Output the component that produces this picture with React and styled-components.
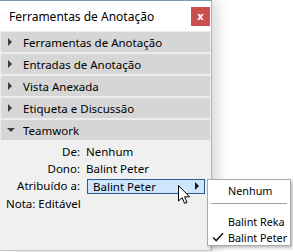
import React from 'react'
import styled, { createGlobalStyle } from 'styled-components'

const GlobalStyle = createGlobalStyle`
  *, *::before, *::after {
    box-sizing: border-box;
  }
  html, body {
    margin: 0;
    padding: 0;
    background: #ffffff;
  }
  body {
    font-family: "Noto Sans", "Open Sans", sans-serif;
    font-size: 11.5px;
    color: #000;
  }
`

const Stage = styled.div`
  position: relative;
  width: 293px;
  height: 252px;
  overflow: hidden;
`

const Panel = styled.div`
  width: 212px;
  height: 251px;
  background: #f0f0f0;
  border-top: 1px solid #7f99b3;
  border-right: 1px solid #b4b4b4;
  border-bottom: 1px solid #c8c8c8;
  box-shadow: 4px 0 14px rgba(0, 0, 0, 0.18);
  display: flex;
  flex-direction: column;
`

const TitleBar = styled.div`
  height: 30px;
  flex-shrink: 0;
  background: #ffffff;
  display: flex;
  align-items: center;
  justify-content: space-between;
  padding: 0 1px 0 9px;
  font-size: 12px;
`

const CloseButton = styled.button`
  width: 19px;
  height: 19px;
  border: none;
  padding: 0;
  background: #c9504f;
  color: #fff;
  font-family: "DejaVu Sans", sans-serif;
  font-weight: bold;
  font-size: 10px;
  line-height: 17px;
  display: flex;
  align-items: center;
  justify-content: center;
`

const Sections = styled.div`
  display: flex;
  flex-direction: column;
  gap: 2px;
  padding: 1px 1px 0 1px;
  background: #ececec;
`

const Header = styled.div`
  height: 20px;
  background: #d6d6d6;
  border-radius: 2px;
  display: flex;
  align-items: center;
  padding-left: ${p => (p.$open ? 6 : 7)}px;
  gap: ${p => (p.$open ? 8 : 11)}px;
`

const Arrow = styled.span`
  width: 0;
  height: 0;
  ${p =>
    p.$open
      ? `border-left: 4px solid transparent;
         border-right: 4px solid transparent;
         border-top: 4px solid #3c3c3c;`
      : `border-top: 4px solid transparent;
         border-bottom: 4px solid transparent;
         border-left: 4px solid #3c3c3c;`}
`

const Body = styled.div`
  flex: 1;
  background: #f0f0f0;
  padding-top: 3px;
  display: flex;
  flex-direction: column;
`

const FieldGrid = styled.div`
  display: grid;
  grid-template-columns: 80px 1fr;
  column-gap: 6px;
  grid-auto-rows: 16px;
  row-gap: 1px;
  align-items: center;
`

const Label = styled.span`
  text-align: right;
`

const Value = styled.span``

const Dropdown = styled.div`
  width: 118px;
  height: 15px;
  border: 1px solid #2a5b92;
  background: #cde6fb;
  display: flex;
  align-items: center;
  justify-content: space-between;
  padding: 0 5px 0 5px;
  margin-top: 2px;
  margin-left: 1px;
`

const SmallRight = styled.span`
  width: 0;
  height: 0;
  border-top: 4px solid transparent;
  border-bottom: 4px solid transparent;
  border-left: 4px solid #1a1a1a;
`

const Note = styled.div`
  padding-left: 6px;
  height: 16px;
  line-height: 16px;
  margin-top: 3px;
`

const Menu = styled.div`
  position: absolute;
  left: 207px;
  top: 179px;
  width: 84px;
  height: 67px;
  background: #ffffff;
  border: 1px solid #a9a9a9;
  box-shadow: 2px 2px 3px rgba(0, 0, 0, 0.25);
  display: flex;
  flex-direction: column;
  padding-top: 2px;
  font-size: 10.8px;
`

const MenuItem = styled.div`
  height: 16px;
  display: flex;
  align-items: center;
  padding-left: 20px;
  white-space: nowrap;
  position: relative;
`

const MenuSeparator = styled.div`
  height: 1px;
  background: #a0a0a0;
  margin: 5px 3px 9px 3px;
`

const Check = styled.svg`
  position: absolute;
  left: 4px;
  top: 3px;
`

const Cursor = styled.svg`
  position: absolute;
  left: 178px;
  top: 185px;
`

const sections = [
  'Ferramentas de Anotação',
  'Entradas de Anotação',
  'Vista Anexada',
  'Etiqueta e Discussão',
]

export default function App() {
  return (
    <Stage>
      <GlobalStyle />
      <Panel>
        <TitleBar>
          <span>Ferramentas de Anotação</span>
          <CloseButton>x</CloseButton>
        </TitleBar>
        <Sections>
          {sections.map(s => (
            <Header key={s}>
              <Arrow />
              <span>{s}</span>
            </Header>
          ))}
          <Header $open>
            <Arrow $open />
            <span>Teamwork</span>
          </Header>
        </Sections>
        <Body>
          <FieldGrid>
            <Label>De:</Label>
            <Value>Nenhum</Value>
            <Label>Dono:</Label>
            <Value>Balint Peter</Value>
            <Label>Atribuído a:</Label>
            <Dropdown>
              <span>Balint Peter</span>
              <SmallRight />
            </Dropdown>
          </FieldGrid>
          <Note>Nota: Editável</Note>
        </Body>
      </Panel>

      <Menu>
        <MenuItem>Nenhum</MenuItem>
        <MenuSeparator />
        <MenuItem>Balint Reka</MenuItem>
        <MenuItem>
          <Check width="12" height="10" viewBox="0 0 12 10">
            <path d="M1 5.5 L4.2 8.6 L11 1.2" fill="none" stroke="#1a1a1a" strokeWidth="1.5" />
          </Check>
          Balint Peter
        </MenuItem>
      </Menu>

      <Cursor width="13" height="20" viewBox="0 0 13 20">
        <path
          d="M0.5 0.5 L0.5 16 L4.2 12.6 L6.6 18.4 L9 17.4 L6.6 11.8 L11.5 11.8 Z"
          fill="#ffffff"
          stroke="#000000"
          strokeWidth="1"
          strokeLinejoin="miter"
        />
      </Cursor>
    </Stage>
  )
}
